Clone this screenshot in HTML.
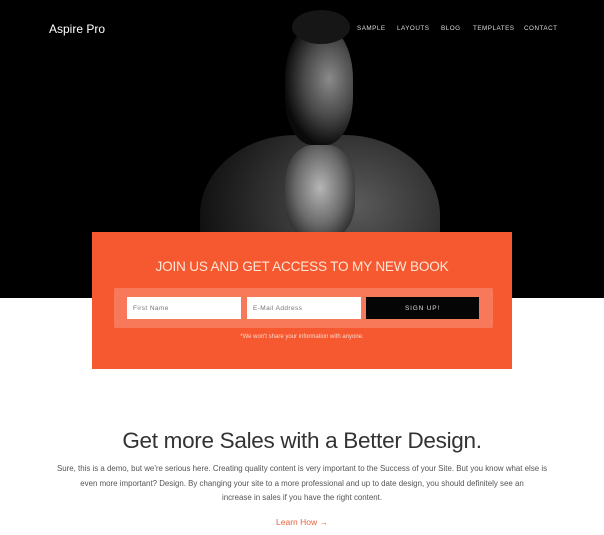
<!DOCTYPE html>
<html><head><meta charset="utf-8"><style>
*{margin:0;padding:0;box-sizing:border-box}
body{width:604px;height:535px;overflow:hidden;background:#fff;font-family:"Liberation Sans",sans-serif;position:relative}
.hero{position:absolute;left:0;top:0;width:604px;height:298px;background:#000;overflow:hidden}
.logo{position:absolute;left:49px;top:22px;color:#fff;font-size:12px}
.nav{position:absolute;top:25px;color:#ddd;font-size:6.3px;letter-spacing:.5px}
.sh{position:absolute}
.box{position:absolute;left:92px;top:232px;width:420px;height:137px;background:#f65830}
.box h2{position:absolute;top:27px;width:100%;text-align:center;color:#fde6d8;font-weight:normal;font-size:13.6px;letter-spacing:-.2px}
.band{position:absolute;left:22px;top:56px;width:379px;height:40px;background:#f8785a;border-radius:2px}
.in{position:absolute;top:9px;height:22px;background:#fff;color:#777;font-size:6.5px;padding:8px 6px;letter-spacing:.4px}
.btn{position:absolute;left:252px;top:9px;width:113px;height:22px;background:#050505;color:#ddd;font-size:6.5px;text-align:center;padding-top:8px;letter-spacing:.8px}
.note{position:absolute;top:102px;width:100%;text-align:center;color:#fcd9cb;font-size:6px}
h1{position:absolute;top:428px;width:604px;text-align:center;font-weight:normal;font-size:22.5px;color:#333;letter-spacing:-.3px}
.p{position:absolute;top:462px;left:48px;width:508px;text-align:center;font-size:7.9px;line-height:14.5px;color:#555}
.lh{position:absolute;top:517px;width:604px;text-align:center;font-size:8.5px;color:#e8623c}
</style></head><body>
<div class="hero">
<div class="sh" style="left:200px;top:135px;width:240px;height:200px;border-radius:40% 40% 0 0;background:radial-gradient(ellipse at 65% 35%,#5a5a5a,#262626 50%,#080808 80%)"></div>
<div class="sh" style="left:285px;top:145px;width:70px;height:95px;background:radial-gradient(ellipse at 50% 45%,#b5b5b5,#6a6a6a 50%,#222 85%);border-radius:40%"></div>
<div class="sh" style="left:285px;top:25px;width:68px;height:120px;border-radius:45% 45% 40% 40%;background:radial-gradient(ellipse at 65% 45%,#8a8a8a,#4a4a4a 40%,#0a0a0a 72%)"></div>
<div class="sh" style="left:292px;top:10px;width:58px;height:34px;border-radius:50%;background:#161616"></div>
<div class="logo">Aspire Pro</div>
<div class="nav" style="left:357px">SAMPLE</div>
<div class="nav" style="left:397px">LAYOUTS</div>
<div class="nav" style="left:441px">BLOG</div>
<div class="nav" style="left:473px">TEMPLATES</div>
<div class="nav" style="left:524px">CONTACT</div>
</div>
<div class="box">
<h2>JOIN US AND GET ACCESS TO MY NEW BOOK</h2>
<div class="band">
<div class="in" style="left:13px;width:114px">First Name</div>
<div class="in" style="left:133px;width:114px">E-Mail Address</div>
<div class="btn">SIGN UP!</div>
</div>
<div class="note">*We won't share your information with anyone.</div>
</div>
<h1>Get more Sales with a Better Design.</h1>
<div class="p">Sure, this is a demo, but we're serious here. Creating quality content is very important to the Success of your Site. But you know what else is even more important? Design. By changing your site to a more professional and up to date design, you should definitely see an<br>increase in sales if you have the right content.</div>
<div class="lh">Learn How →</div>
</body></html>
